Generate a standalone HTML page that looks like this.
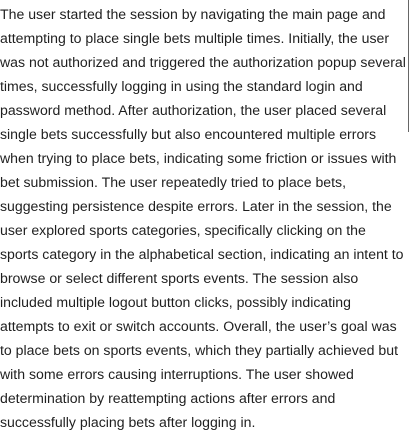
<!DOCTYPE html>
<html><head><meta charset="utf-8"><style>
html,body{margin:0;padding:0;background:#fff;width:410px;height:433px;overflow:hidden}
.t{position:absolute;left:0;top:2px;font-family:"Liberation Sans",sans-serif;font-size:14.1px;line-height:24px;color:#1f1f1f;white-space:nowrap;letter-spacing:0}
.bar{position:absolute;left:408px;top:0;width:1px;height:132px;background:#666}
</style></head><body>
<div class="t">The user started the session by navigating the main page and<br>
attempting to place single bets multiple times. Initially, the user<br>
was not authorized and triggered the authorization popup several<br>
times, successfully logging in using the standard login and<br>
password method. After authorization, the user placed several<br>
single bets successfully but also encountered multiple errors<br>
when trying to place bets, indicating some friction or issues with<br>
bet submission. The user repeatedly tried to place bets,<br>
suggesting persistence despite errors. Later in the session, the<br>
user explored sports categories, specifically clicking on the<br>
sports category in the alphabetical section, indicating an intent to<br>
browse or select different sports events. The session also<br>
included multiple logout button clicks, possibly indicating<br>
attempts to exit or switch accounts. Overall, the user’s goal was<br>
to place bets on sports events, which they partially achieved but<br>
with some errors causing interruptions. The user showed<br>
determination by reattempting actions after errors and<br>
successfully placing bets after logging in.</div>
<div class="bar"></div>
</body></html>
